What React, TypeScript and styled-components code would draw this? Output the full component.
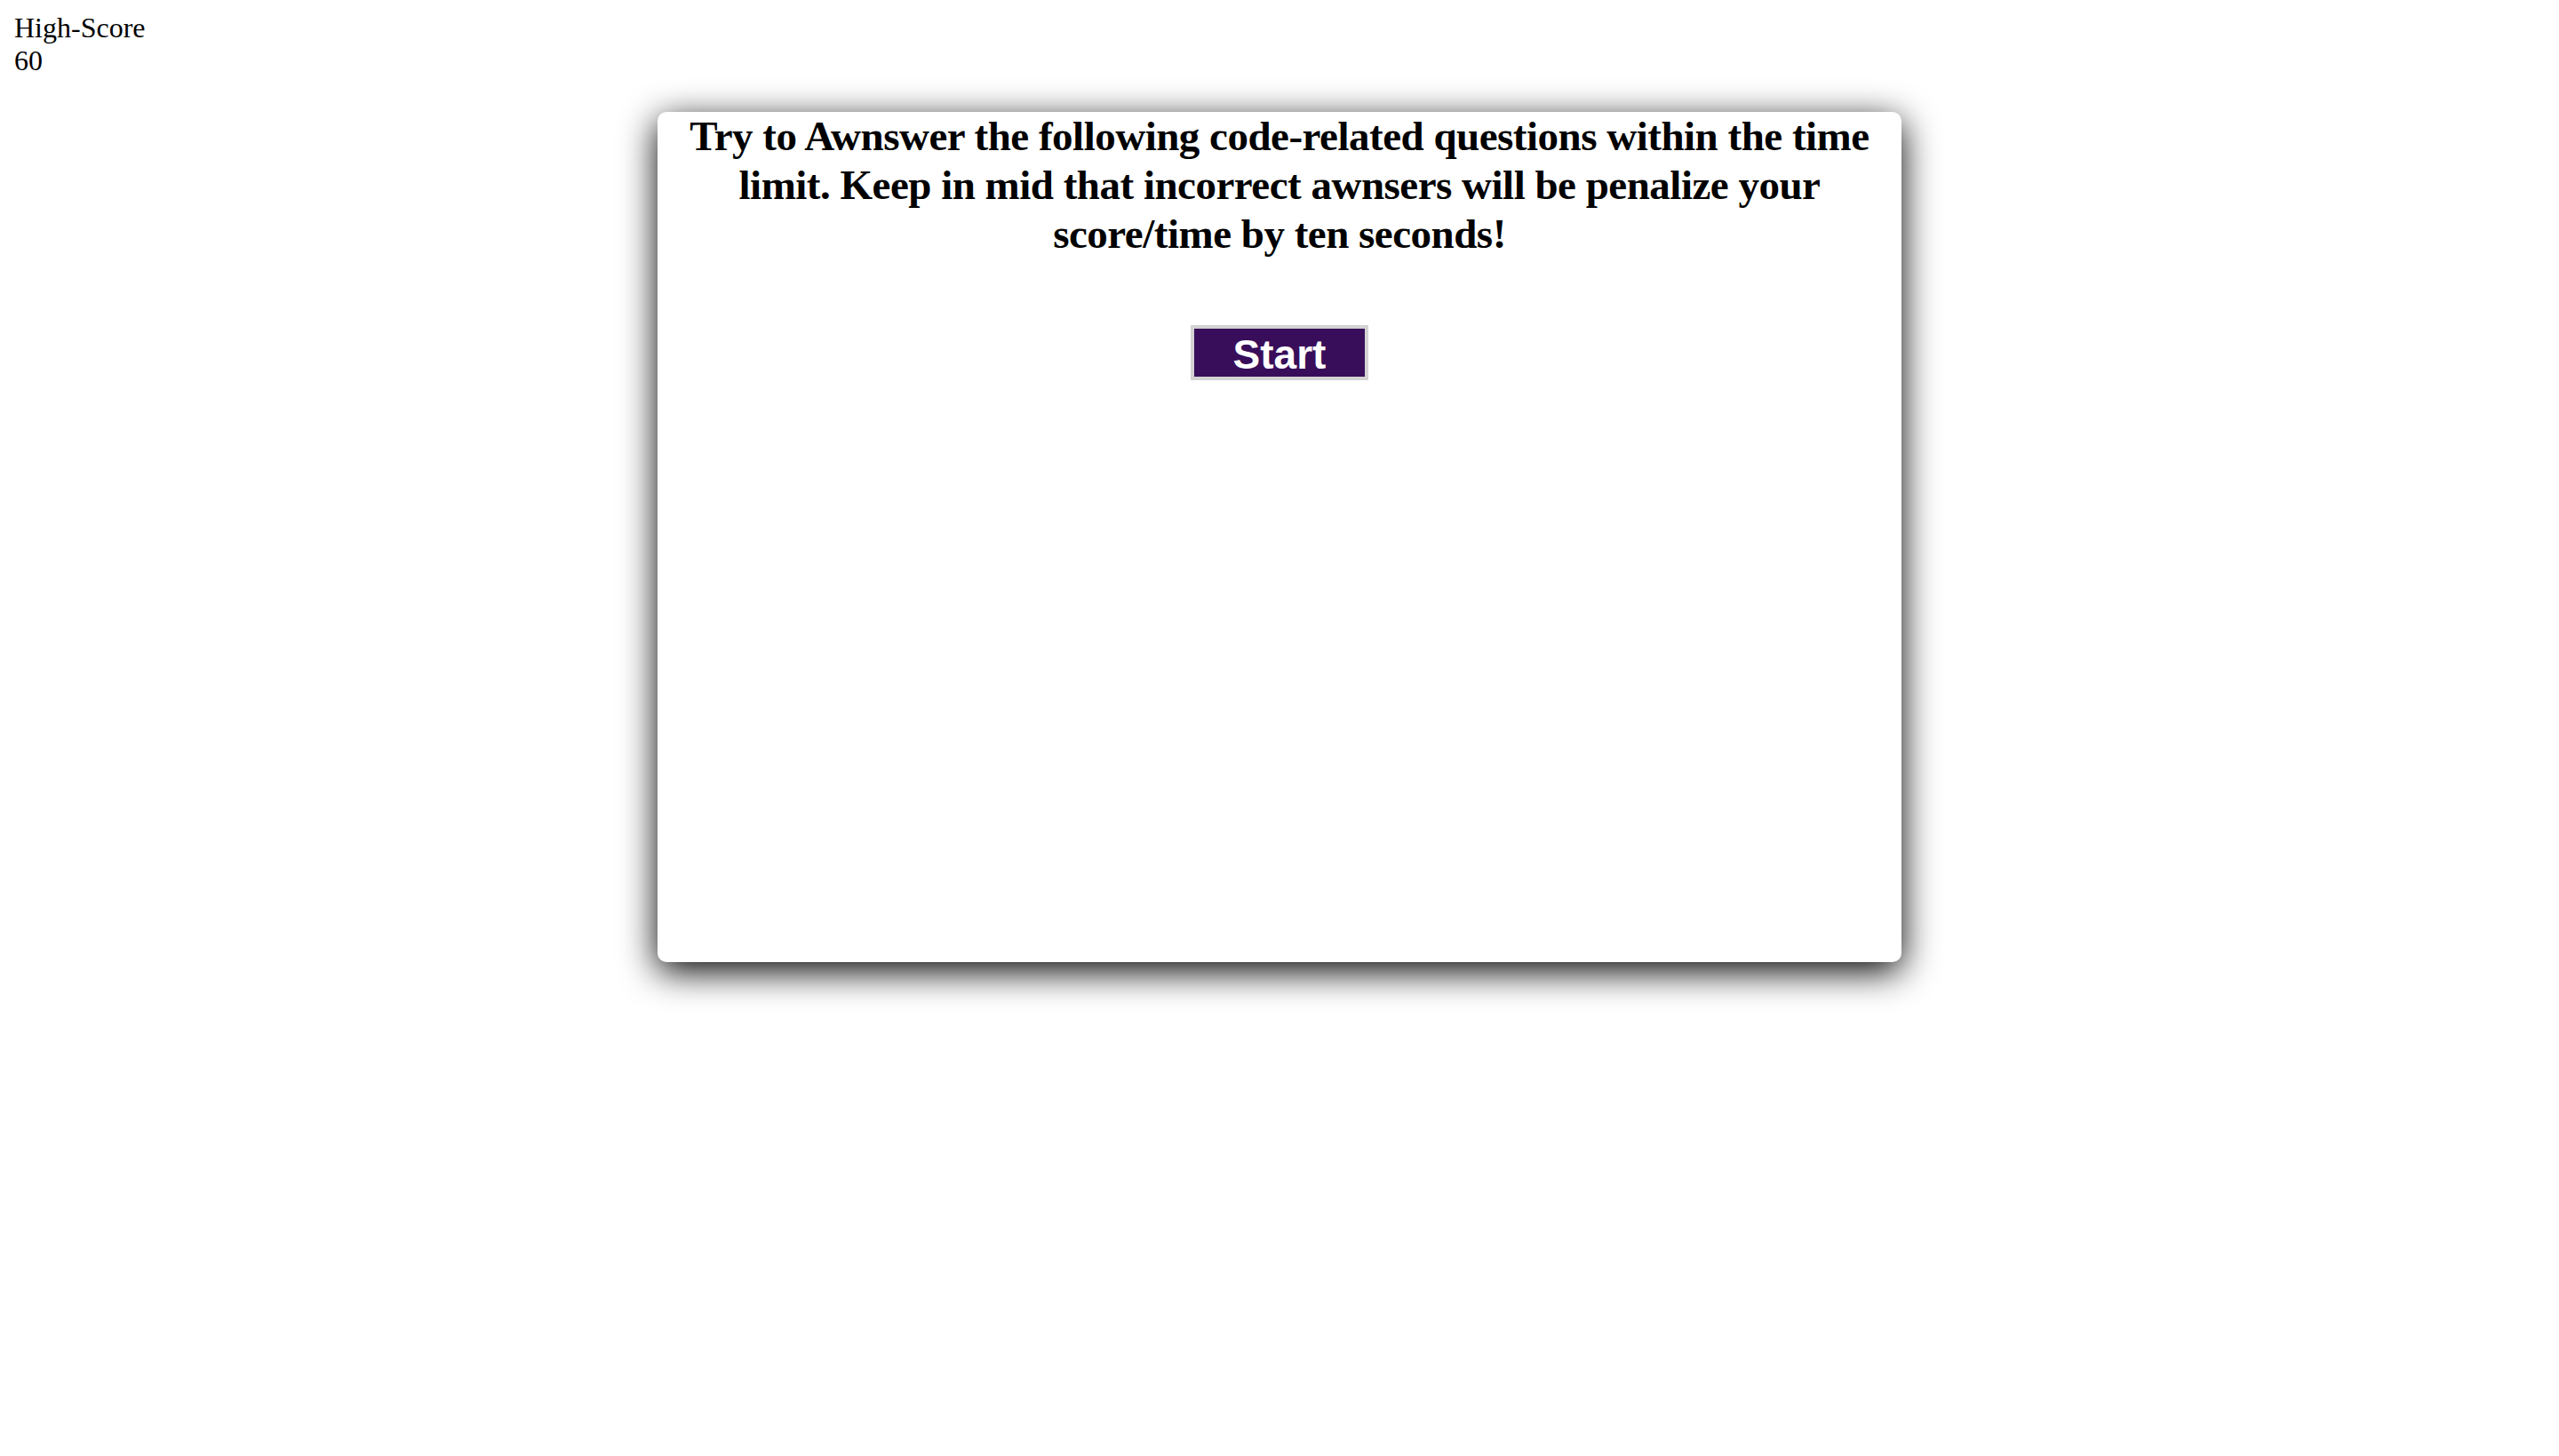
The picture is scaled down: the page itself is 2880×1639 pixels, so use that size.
import React from "react";
import styled, { createGlobalStyle } from "styled-components";

const GlobalStyle = createGlobalStyle`
  html, body {
    margin: 0;
    padding: 0;
    background: #ffffff;
  }
  body {
    padding: 16px;
    min-height: 100vh;
    box-sizing: border-box;
    font-family: "Liberation Serif", "Times New Roman", serif;
    font-size: 32px;
    color: #000;
  }
`;

const ScoreBox = styled.header`
  display: flex;
  flex-direction: column;
  line-height: 37px;
  margin-top: -3px;
`;

const Main = styled.main`
  display: flex;
  justify-content: center;
  margin-top: 39px;
  margin-left: -16px;
  margin-right: -16px;
  padding-bottom: 80px;
`;

const Card = styled.section`
  width: 1400px;
  height: 957px;
  box-sizing: border-box;
  background: #ffffff;
  border-radius: 10px;
  box-shadow: 0 10px 40px #000;
  display: flex;
  flex-direction: column;
  align-items: center;
  padding: 0 30px;
`;

const Heading = styled.h2`
  margin: 0;
  font-family: "Liberation Serif", "Times New Roman", serif;
  font-weight: bold;
  font-size: 47px;
  letter-spacing: -0.5px;
  line-height: 55px;
  text-align: center;
`;

const StartButton = styled.button`
  margin-top: 75px;
  width: 200px;
  height: 62px;
  box-sizing: border-box;
  background: #380e5a;
  border: 4px solid #d3d3d3;
  color: #ffffff;
  font-family: "Liberation Sans", Arial, sans-serif;
  font-weight: bold;
  font-size: 46px;
  line-height: 1;
  padding: 4px 0 0;
  cursor: pointer;
  display: flex;
  align-items: center;
  justify-content: center;
`;

export default function App() {
  return (
    <>
      <GlobalStyle />
      <ScoreBox>
        <span>High-Score</span>
        <span>60</span>
      </ScoreBox>
      <Main>
        <Card>
          <Heading>
            Try to Awnswer the following code-related questions within the time
            limit. Keep in mid that incorrect awnsers will be penalize your
            score/time by ten seconds!
          </Heading>
          <StartButton>Start</StartButton>
        </Card>
      </Main>
    </>
  );
}
